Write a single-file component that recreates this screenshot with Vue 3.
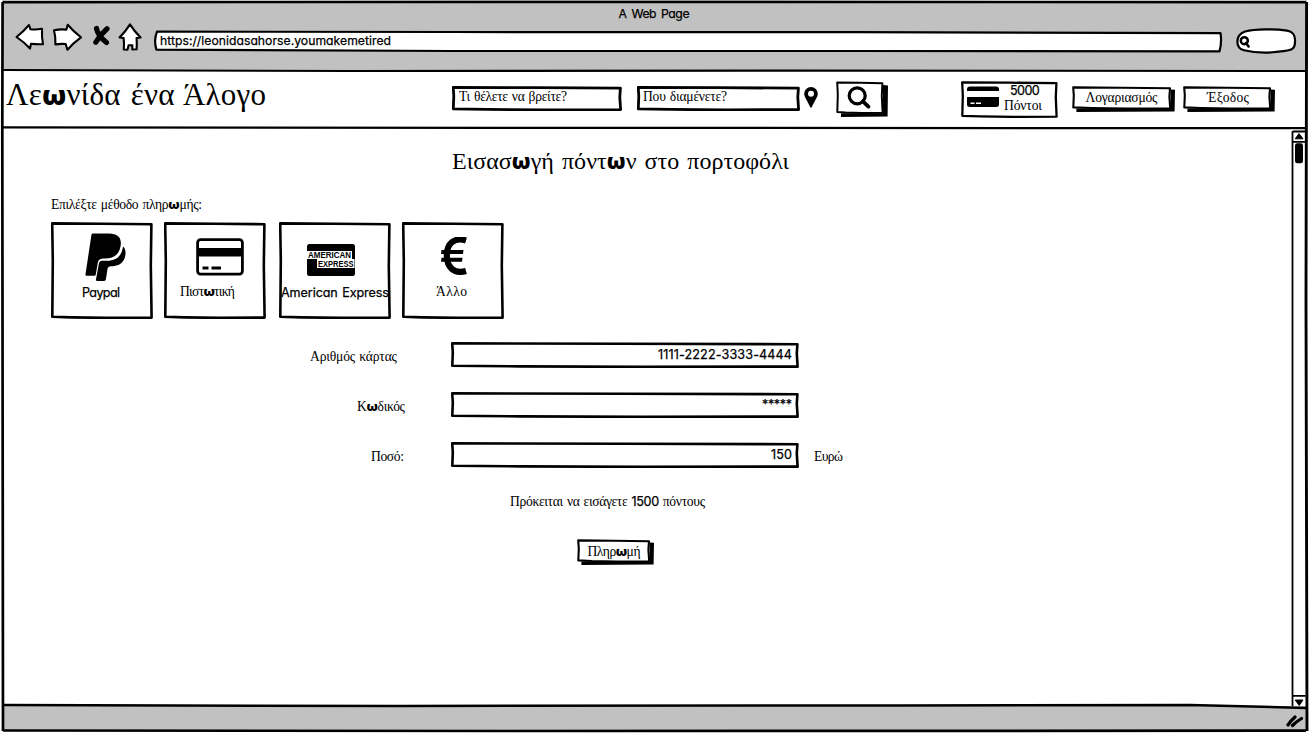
<script setup>
import { h } from 'vue'

const Sketch = (p) => {
  const w = Number(p.w), t = Number(p.h), s = Number(p.s || 2.6)
  const shade = Number(p.shade || 0)
  const W = w - shade, H = t - shade * 0.7
  const kids = []
  if (shade) {
    kids.push(h('path', {
      d: `M${shade + 1} ${H - 1} L${shade + 1} ${t} L${w - 0.4} ${t - 0.4} L${w} ${shade + 0.4} L${W - 1} ${shade} L${W - 1} ${H - 1}Z`,
      fill: '#000',
    }))
  }
  kids.push(h('path', {
    d: `M1.2 1.4 L${W * 0.5} 1.7 L${W - 1.6} 2.2 L${W - 2.2} ${H * 0.45} L${W - 1.4} ${H - 1.4} L${W * 0.55} ${H - 1.1} L${W * 0.2} ${H - 1.6} L1.3 ${H - 2.2} L1.8 ${H * 0.4}Z`,
    fill: '#fff', stroke: '#000', 'stroke-width': s, 'stroke-linejoin': 'round',
  }))
  return h('svg', { viewBox: `0 0 ${w} ${t}`, width: w, height: t, 'aria-hidden': 'true' }, kids)
}
Sketch.props = ['w', 'h', 's', 'shade']

// Spreads the letters of a label over a given width
const vFit = {
  mounted(el, { value }) {
    const n = el.textContent.length
    const natural = el.getBoundingClientRect().width
    el.style.letterSpacing = `${(value - natural) / (n - 1)}px`
    el.style.width = `${value}px`
  },
}

const fields = [
  { label: 'Αριθμός κάρτας', lw: 87, value: '1111-2222-3333-4444', vw: 134, cls: 'f1' },
  { label: 'Κ|ω|δικός', lw: 48, value: '*****', vw: 30, cls: 'f2' },
  { label: 'Ποσό:', lw: 33, value: '150', vw: 21, cls: 'f3', unit: 'Ευρώ' },
]
</script>

<template>
  <div class="window">
    <header class="chrome">
      <div class="title"><span v-fit="71">A Web Page</span></div>
      <div class="bar">
        <svg class="nav back" viewBox="14 22 32 30" width="32" height="30"><path d="M16.5 37Q23 32 29 25L30.5 29.3Q36 30 42 28.8Q41.6 37 43 44.2Q37 44.5 31 43.8L30 48.5Q24 42 16.5 37Z" /></svg>
        <svg class="nav fwd" viewBox="52 22 32 30" width="32" height="30"><path d="M54 30.2Q60 29 66.5 29.6L67.7 24.8Q73 31 81 37.3Q73 43 67.4 49.8L65.7 44Q60 43.6 55.4 44.4Q55.8 37 54 30.2Z" /></svg>
        <svg class="nav stop" viewBox="92 24 20 24" width="20" height="24"><path d="M97.5 28.5Q99 36 107.5 42.5M108 28.8Q101 35 96.8 42.3" /></svg>
        <svg class="nav home" viewBox="118 22 25 30" width="25" height="30"><path d="M130 24.4Q134 31 140.6 37.5L136.6 38Q137 44 136.6 49.3L132.3 49.5L132.3 45.2L128.6 45.2L127.5 49.8L123.8 49.5Q124.3 43 123.6 38L119.5 37.5Q126 31 130 24.4Z" /></svg>
        <div class="address">
          <svg viewBox="0 0 1070 23" width="1070" height="23"><path d="M4 1.6L300 2L700 2.2L1067.5 3.2Q1069 12 1066.5 21.4L700 21L300 21L3.4 19.6Q.5 10 4 1.6Z" /></svg>
          <span v-fit="231" class="sans">https://leonidasahorse.youmakemetired</span>
        </div>
        <svg class="find" viewBox="0 0 62 26" width="62" height="26">
          <path d="M10 3.5C20 1 40 .8 52 2.6C59 4 60.5 8 60 14C60 22 55 22 48 23.2C36 25 20 25 9 22.3C0 20 0 7 10 3.5Z" fill="#fff" stroke="#000" stroke-width="2.2" />
          <circle cx="9.3" cy="12.7" r="3.5" fill="none" stroke="#000" stroke-width="2.5" /><path d="M11 15L13.6 18.5" stroke="#000" stroke-width="2.6" stroke-linecap="round" />
        </svg>
      </div>
    </header>

    <section class="site">
      <h1 class="logo"><span v-fit="260">Λε<b>ω</b>νίδα ένα Άλογο</span></h1>
      <div class="box query"><Sketch w="170" h="25" s="2.8" /><span v-fit="108">Τι θέλετε να βρείτε?</span></div>
      <div class="box place"><Sketch w="163" h="25" s="2.8" /><span v-fit="84">Που διαμένετε?</span></div>
      <svg class="pin" viewBox="0 0 14 21" width="14" height="21"><path fill-rule="evenodd" d="M7 0A6.8 6.8 0 0 1 13.8 6.8C13.8 10 11 13 7.9 20Q7 21.6 6.1 20C3 13 .2 10 .2 6.8A6.8 6.8 0 0 1 7 0ZM7 3.8A3 3 0 1 0 7 9.8A3 3 0 1 0 7 3.8Z" /></svg>
      <div class="box go"><Sketch w="52" h="36" s="2" shade="4" />
        <svg class="lens" viewBox="0 0 24 24" width="24" height="24"><circle cx="10.2" cy="9.8" r="8" fill="none" stroke="#000" stroke-width="3.2" /><path d="M16 15.3L21.4 20.6" stroke="#000" stroke-width="3.8" stroke-linecap="round" /></svg>
      </div>
      <div class="box points"><Sketch w="97" h="37" s="2.3" />
        <svg class="card-icon" viewBox="0 0 32 22" width="32" height="22"><path d="M0 5V3Q0 .5 3 .5H29Q32 .5 32 3V5ZM0 11H32V18.5Q32 21 29 21H3Q0 21 0 18.5Z" /><path d="M3.5 17.2H7.5M9 17.2H14" stroke="#fff" stroke-width="1.5" /></svg>
        <div class="amount"><span v-fit="31" class="sans">5000</span><span v-fit="38">Πόντοι</span></div>
      </div>
      <div class="box account"><Sketch w="103" h="26" s="2.1" shade="3.4" /><span v-fit="72">Λογαριασμός</span></div>
      <div class="box exit"><Sketch w="92" h="26" s="2.1" shade="3.4" /><span v-fit="42">Έξοδος</span></div>
    </section>

    <div class="body">
      <main>
        <h2><span v-fit="337">Εισασ<b>ω</b>γή πόντ<b>ω</b>ν στο πορτοφόλι</span></h2>
        <p class="choose"><span v-fit="151">Επιλέξτε μέθοδο πληρ<b>ω</b>μής:</span></p>
        <div class="methods">
          <div class="box method m1"><Sketch w="102" h="97" />
            <svg viewBox="0 0 42 50" width="42" height="50"><path d="M7.5 1.5H24C33 1.5 37 6 35.6 14C34 23.5 28 26.5 20 26.6C14 26.7 13.3 28 12.6 32L10.8 42.5Q10.6 43.8 9.2 43.8H1.6Q.2 43.8 .5 42.3L6.4 3Q6.6 1.5 7.5 1.5Z" /><path d="M38 14.5C41 17 41 22 39.7 26C37.8 32 32 34.3 26 34.3Q23 34.3 22.5 37L20.9 47.3Q20.7 49 19 49H12.2Q10.7 49 11 47.3L14 31Q14.6 28.8 17 28.8H22C31.5 28.8 36.8 24 38 14.5Z" /></svg>
            <span v-fit="38" class="sans">Paypal</span></div>
          <div class="box method m2"><Sketch w="102" h="97" />
            <svg viewBox="0 0 48 38" width="48" height="38"><rect x="1.6" y="1.6" width="44.8" height="34.5" rx="3" fill="none" stroke="#000" stroke-width="2.8" /><path d="M1 10H47V18.5H1ZM6.5 28.5H12.5V31.5H6.5ZM15.5 28.5H25V31.5H15.5Z" /></svg>
            <span v-fit="55">Πιστ<b>ω</b>τική</span></div>
          <div class="box method m3"><Sketch w="112" h="97" />
            <svg viewBox="0 0 48 32" width="48" height="32"><rect width="48" height="32" rx="2.5" /><path d="M0 7H45V15H47.5V24H10V15H0Z" fill="#fff" /><g class="amex"><text x="1" y="14" textLength="43" lengthAdjust="spacingAndGlyphs">AMERICAN</text><text x="11" y="23" textLength="35.5" lengthAdjust="spacingAndGlyphs">EXPRESS</text></g></svg>
            <span v-fit="108" class="sans">American Express</span></div>
          <div class="box method m4"><Sketch w="102" h="97" />
            <svg viewBox="0 0 28 38" width="28" height="38"><path d="M26 3.5C14 -.2 7 7 6.8 18C6.6 30 14 37.5 26 34" fill="none" stroke="#000" stroke-width="6.2" /><path d="M1.5 13H23.5L23 17H1ZM1.5 20.7H22.6L22 24.7H1Z" /></svg>
            <span v-fit="31">Άλλο</span></div>
        </div>
        <form>
          <div v-for="f in fields" :key="f.cls" class="row" :class="f.cls">
            <label><span v-fit="f.lw"><template v-for="(part, i) in f.label.split('|')" :key="i"><b v-if="i === 1">{{ part }}</b><template v-else>{{ part }}</template></template></span></label>
            <div class="box entry"><Sketch w="348" h="26" s="2.6" /><span v-fit="f.vw" class="sans">{{ f.value }}</span></div>
            <span v-if="f.unit" v-fit="29" class="unit">{{ f.unit }}</span>
          </div>
        </form>
        <p class="note"><span v-fit="195">Πρόκειται να εισάγετε <i class="sans">1500</i> πόντους</span></p>
        <div class="box pay"><Sketch w="77" h="26" s="2.1" shade="3.4" /><span v-fit="53">Πληρ<b>ω</b>μή</span></div>
      </main>
      <svg class="scroll" viewBox="0 0 15 578" width="15" height="578"><path d="M2 2.5H14.5M1.5 2V577M1.5 12.8H14.5M1 566.8H14.5" fill="none" stroke="#000" stroke-width="1.8" /><path d="M8 4.6L12 9.8H4.2ZM4.2 571H12L8.2 576.5Z" stroke="#000" stroke-width="1" stroke-linejoin="round" /><rect x="4" y="14.2" width="8" height="20" rx="2.2" /></svg>
    </div>

    <footer><svg viewBox="0 0 18 14" width="18" height="14"><path d="M2 11Q5 6.5 9 3M6.5 11.5Q10.5 7.5 15.5 4.5" /></svg></footer>

    <svg class="outline" viewBox="0 0 1309 733" width="1309" height="733">
      <path d="M2.8 2.2L500 2L1306 2.2" stroke-width="2.4" />
      <path d="M2.6 2L2.3 130L3 731" stroke-width="2.7" />
      <path d="M1306.6 2L1306 300L1307 731" stroke-width="2.9" />
      <path d="M3 70L350 71L800 70.6L1306 71" stroke-width="2.1" />
      <path d="M2 127.3L500 127.8L1306 128.2" stroke-width="2.3" />
      <path d="M3 705L400 706L900 705.4L1190 705L1306 708" stroke-width="2.5" />
      <path d="M3 730.5L500 731L1306 730.7" stroke-width="2.7" />
    </svg>
  </div>
</template>

<style>
body { margin: 0; background: #fff; overflow: hidden; }
</style>

<style scoped>
.window { position: relative; width: 1309px; height: 733px; display: flex; flex-direction: column; overflow: hidden; color: #000; background: #fff; font: 13.6px/20px "Liberation Serif", serif; white-space: nowrap; word-spacing: 1px; }
h1, h2, p { margin: 0; font-weight: 400; }
svg { display: block; flex: none; }
span { display: inline-block; }
b { font: 800 .92em/0 "Open Sans", "Liberation Sans", sans-serif; }
.sans { font-family: Inter, "Liberation Sans", sans-serif; font-size: 12.6px; font-feature-settings: "cv11"; font-style: normal; -webkit-text-stroke: .25px #000; }
.outline { position: absolute; inset: 0; pointer-events: none; fill: none; stroke: #000; }
.chrome { height: 71px; background: #c1c1c1; flex: none; margin: 0 2px; box-sizing: border-box; padding-top: 4px; }
.title { height: 18px; margin-left: 616.5px; }
.title span { font: 12.2px/20px Inter, "Liberation Sans", sans-serif; font-feature-settings: "cv11"; -webkit-text-stroke: .25px #000; word-spacing: 2px; }
.bar { display: flex; align-items: flex-start; }
.nav { fill: #fff; stroke: #000; stroke-width: 2.1; stroke-linejoin: round; }
.back { margin-left: 12px; }
.fwd { margin-left: 6px; }
.stop { margin: 2px 0 0 7px; fill: none; stroke-width: 5.2; stroke-linecap: round; }
.home { margin-left: 7px; }
.address { display: grid; margin: 8px 0 0 10px; width: 1070px; }
.address > * { grid-area: 1 / 1; justify-self: start; }
.address path { fill: #fff; stroke: #000; stroke-width: 2.2; stroke-linejoin: round; }
.address span { margin: 1px 0 0 7px; font-size: 12.2px; }
.find { margin: 6px 0 0 12px; }
.site { height: 57px; flex: none; display: flex; align-items: flex-start; }
.logo { width: 446px; padding-left: 6px; font-size: 31px; line-height: 40px; padding-top: 4px; word-spacing: 2px; }
.logo b { font-size: .86em; }
.box { display: grid; flex: none; align-items: start; justify-items: center; }
.box > * { grid-area: 1 / 1; }
.query, .place { justify-items: start; margin-top: 15px; }
.query span { margin: 1px 0 0 7px; }
.place { margin-left: 15px; }
.place span { margin: 1px 0 0 6px; }
.pin { margin: 16px 0 0 4px; }
.go { margin: 10px 0 0 18px; }
.go .lens { margin: 5px 6px 0 0; }
.points { margin: 10px 0 0 73px; justify-items: start; }
.card-icon { margin: 5px 0 0 6px; }
.amount { display: flex; flex-direction: column; margin-left: 43px; line-height: 15px; margin-top: 2px; }
.amount span:first-child { margin-left: 6px; }
.account { margin: 15px 0 0 14px; }
.account span { margin: 2px 4px 0 0; }
.exit { margin: 15px 0 0 8px; }
.exit span { margin: 2px 2px 0 0; }
.body { flex: none; height: 578px; display: flex; justify-content: space-between; }
.scroll { margin: 1px 3px 0 0; }
main { width: 1000px; padding-top: 16px; }
h2 { margin-left: 452px; font-size: 24px; line-height: 34px; height: 34px; word-spacing: 2px; }
h2 b { font-size: .86em; }
.choose { margin: 17px 0 7px 51px; height: 20px; }
.methods { display: flex; margin-left: 51px; height: 98px; }
.method { justify-items: start; }
.method > .sans { margin-top: 61px; }
.method > span { margin-top: 60px; }
.m1 > svg:nth-child(2) { margin: 10px 0 0 34px; }
.m1 > span { margin-left: 31px; }
.m2 { margin-left: 11px; }
.m2 > svg:nth-child(2) { margin: 16px 0 0 32px; }
.m2 > span { margin-left: 16px; }
.m3 { margin-left: 13px; }
.m3 > svg:nth-child(2) { margin: 22px 0 0 28px; }
.m3 > span { margin-left: 2px; }
.m4 { margin-left: 11px; }
.m4 > svg:nth-child(2) { margin: 15px 0 0 38px; }
.m4 > span { margin-left: 34px; }
.amex { font: 700 8.8px "Liberation Sans", sans-serif; fill: #000; word-spacing: 0; }
form { padding-top: 22px; }
.row { display: flex; height: 50px; }
.row label { width: 451px; box-sizing: border-box; display: flex; justify-content: flex-end; padding: 5px 54px 0 0; }
.f2 label { padding-right: 46px; }
.f3 label { padding-right: 47px; }
.entry { justify-items: end; }
.entry span { margin: 3px 7px 0 0; }
.unit { margin: 5px 0 0 15px; }
.note { margin: 0 0 0 510px; height: 20px; }
.pay { width: 77px; margin: 27px 0 0 577px; }
.pay span { margin: 3px 3px 0 0; }
footer { height: 25px; margin: 0 3px 0 3px; background: #c1c1c1; display: flex; justify-content: flex-end; align-items: center; }
footer svg { margin: 4px 2px 0 0; }
footer path { fill: none; stroke: #000; stroke-width: 3.2; stroke-linecap: round; }
</style>
